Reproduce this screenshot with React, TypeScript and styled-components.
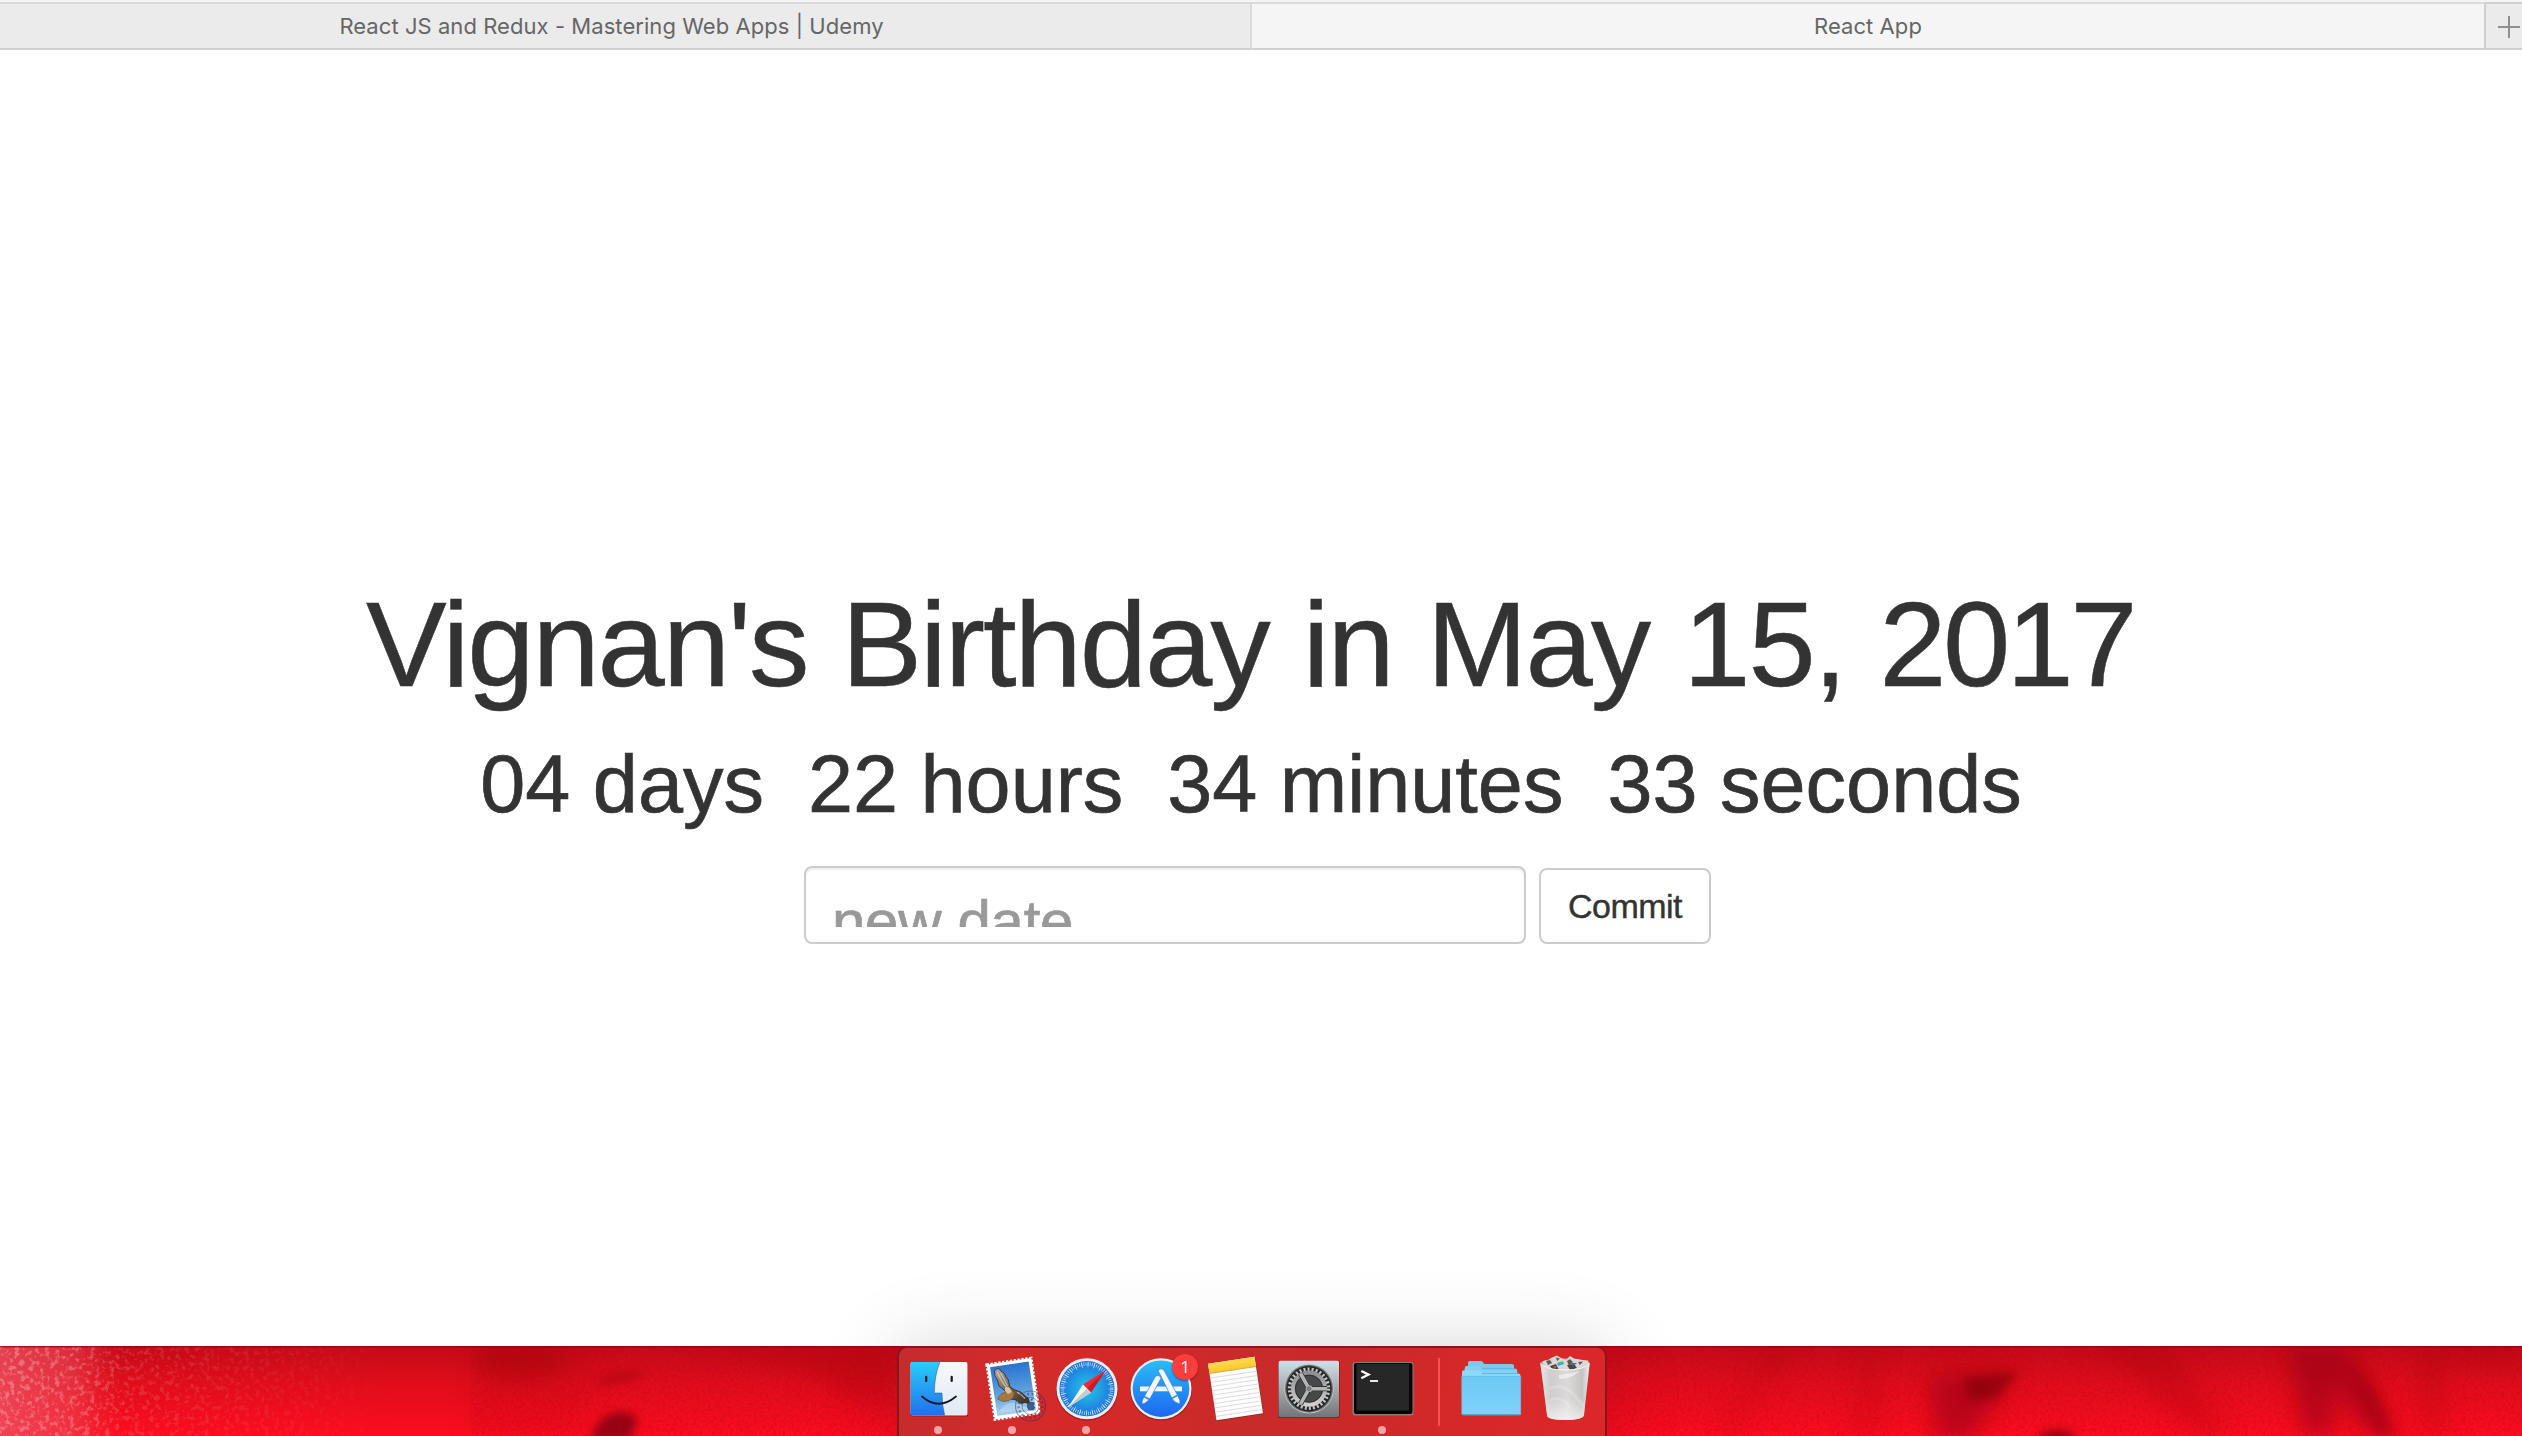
import React from "react";
import styled, { createGlobalStyle } from "styled-components";

const GlobalStyle = createGlobalStyle`
  * { box-sizing: border-box; }
  html, body { margin: 0; padding: 0; background: #fff; }
  body { overflow: hidden; font-family: "Liberation Sans", Arial, sans-serif; color: #333; }
`;

const Screen = styled.div`
  display: flex;
  flex-direction: column;
  width: 2522px;
  height: 1436px;
  overflow: hidden;
`;

const TabBar = styled.div`
  display: flex;
  height: 50px;
  padding-top: 2px;
  background: #f5f5f5;
`;

const Tab = styled.div<{ $width: number; $active?: boolean; $inset?: number }>`
  display: flex;
  align-items: center;
  justify-content: center;
  width: ${(p) => p.$width}px;
  height: 48px;
  padding: 0 ${(p) => p.$inset ?? 0}px 1px 0;
  border-top: 2px solid #dadada;
  border-bottom: 2px solid #d0d0d0;
  border-right: 2px solid ${(p) => (p.$active ? "#d0d0d0" : "#dadada")};
  background: ${(p) => (p.$active ? "#f5f5f5" : "#ebebeb")};
  font: 400 22px Inter, Roboto, sans-serif;
  letter-spacing: 0.06px;
  color: #666;
  white-space: pre;
`;

const NewTab = styled.div`
  flex: 1;
  display: flex;
  align-items: center;
  padding-left: 12px;
  border-top: 2px solid #d0d0d0;
  border-bottom: 2px solid #d0d0d0;
  background: #ebebeb;
  svg { display: block; margin-bottom: -2px; }
`;

const Page = styled.main`
  display: flex;
  flex-direction: column;
  align-items: center;
  height: 1296px;
  padding: 528px 22px 0 0;
  background: #fff;
`;

const Title = styled.h1`
  margin: 0;
  height: 132px;
  line-height: 132px;
  font-size: 121px;
  font-weight: 400;
  letter-spacing: -2.1px;
  word-spacing: 2.6px;
  white-space: nowrap;
  -webkit-text-stroke: 0.5px #333;
`;

const Year = styled.span`
  letter-spacing: -3.6px;
`;

const Countdown = styled.div`
  display: flex;
  gap: 44px;
  margin-top: 29px;
  padding-left: 2px;
  height: 90px;
  line-height: 90px;
  font-size: 81px;
  white-space: nowrap;
  -webkit-text-stroke: 0.7px #333;
`;

const Form = styled.div`
  display: flex;
  align-items: flex-end;
  gap: 13px;
  margin-top: 37px;
  margin-left: 15px;
`;

const Field = styled.div`
  width: 722px;
  height: 78px;
  padding: 0 26px;
  border: 2px solid #ccc;
  border-radius: 8px;
  box-shadow: inset 0 2px 2px rgba(0, 0, 0, 0.075);
`;

const Placeholder = styled.div`
  height: 59px;
  overflow: hidden;
  line-height: 108px;
  font-size: 60px;
  letter-spacing: -0.3px;
  color: #999;
  white-space: nowrap;
  -webkit-text-stroke: 0.7px #999;
`;

const Commit = styled.button`
  width: 172px;
  height: 76px;
  padding: 0;
  border: 2px solid #ccc;
  border-radius: 8px;
  background: #fff;
  font: 400 34px "Liberation Sans", Arial, sans-serif;
  letter-spacing: -0.5px;
  color: #333;
  -webkit-text-stroke: 0.4px #333;
`;

const Desktop = styled.div`
  position: relative;
  display: flex;
  justify-content: center;
  height: 90px;
  padding-right: 18px;
  background: #e80d1c;
`;

const Wallpaper = styled.svg`
  position: absolute;
  inset: 0;
  display: block;
`;

const Dock = styled.div`
  position: relative;
  display: flex;
  width: 710px;
  height: 100px;
  padding: 0 3px;
  border: 2px solid #85161a;
  border-radius: 10px 10px 0 0;
  background: linear-gradient(100deg, #c42c2d 0%, #d32a2a 17%, #d52929 30%, #c92a2a 48%, #c92929 62%, #d62829 80%, #dc2729 100%);
  box-shadow: 0 0 80px rgba(0, 0, 0, 0.16);
`;

const Slot = styled.div`
  position: relative;
  display: flex;
  flex-direction: column;
  flex-shrink: 0;
  align-items: center;
  width: 74px;
  svg { display: block; overflow: visible; }
`;

const Running = styled.span`
  width: 8px;
  height: 8px;
  margin-right: 2px;
  border-radius: 50%;
  background: #fda3a7;
`;

const Badge = styled.span`
  position: absolute;
  left: 48px;
  top: 6px;
  width: 26px;
  height: 26px;
  border-radius: 50%;
  background: #fb3d3d;
  box-shadow: 0 1px 2px rgba(0, 0, 0, 0.4);
  font: 400 17px/26px "Open Sans", sans-serif;
  color: #fff;
  text-align: center;
`;

const Divider = styled.span`
  flex: 0 0 2px;
  height: 68px;
  margin: 10px 14px 0 18px;
  background: #fb5153;
`;

/* Every icon is drawn in the dock's own coordinates; x is the left edge of its slot. */
const Icon = ({ x, children }: { x: number; children: React.ReactNode }) => (
  <svg width="74" height="78" viewBox={`${x} 1348 74 78`}>{children}</svg>
);

const Finder = () => (
  <Icon x={902}>
    <defs>
      <linearGradient id="fb" x1="0" y1="0" x2="0" y2="1"><stop offset="0" stopColor="#29cdf8" /><stop offset="1" stopColor="#2170ee" /></linearGradient>
      <linearGradient id="fw" x1="0" y1="0" x2="0" y2="1"><stop offset="0" stopColor="#f7f8fa" /><stop offset="1" stopColor="#e0e9f4" /></linearGradient>
    </defs>
    <rect x="910" y="1362.500" width="58" height="54" rx="2" fill="#7f1719" opacity=".6" />
    <rect x="910.5" y="1362" width="57" height="53.500" rx="2" fill="url(#fw)" />
    <path d="M912.5 1362H940Q934.5 1375 934.3 1393H942Q942 1405 944.7 1415.500H912.5Q910.5 1415.500 910.5 1413.500V1364Q910.5 1362 912.5 1362Z" fill="url(#fb)" />
    <path d="M940 1362Q934.5 1375 934.3 1393H942Q942 1405 944.7 1415.500" fill="none" stroke="#1a4d7a" strokeWidth=".7" opacity=".65" />
    <path d="M926.200 1376.800V1381M951.700 1376.800V1381" stroke="#101820" strokeWidth="2.200" strokeLinecap="round" />
    <path d="M922 1396.500Q938.500 1411 956 1396.500" fill="none" stroke="#101820" strokeWidth="1.700" strokeLinecap="round" />
  </Icon>
);

const Mail = () => (
  <Icon x={976}>
    <defs>
      <linearGradient id="sky" x1="0" y1="0" x2="0" y2="1"><stop offset="0" stopColor="#2a72ce" /><stop offset=".55" stopColor="#5b9ee0" /><stop offset="1" stopColor="#a9d0ee" /></linearGradient>
      <linearGradient id="wing" x1="0" y1="0" x2="1" y2="1"><stop offset="0" stopColor="#b3aca3" /><stop offset=".45" stopColor="#7d6a55" /><stop offset="1" stopColor="#3b2a1c" /></linearGradient>
    </defs>
    <g transform="rotate(-8.500 1013 1388.500)">
      <rect x="990.500" y="1361" width="45" height="55.500" fill="#fff" stroke="#fff" strokeWidth="2.600" strokeDasharray="2.300 1.600" />
      <rect x="993.500" y="1364" width="39" height="49.500" fill="url(#sky)" />
    </g>
    <path d="M999 1411Q1010 1398 1020 1405T1034 1398L1036 1408L997 1413Z" fill="#d6e9f7" opacity=".4" />
    <path d="M994.500 1371Q998 1366 1001 1371L1004 1373L1006 1377L1008 1379L1010 1387L1015 1390Q1021 1391 1024 1395L1028 1398L1030 1404L1025 1402.500L1021 1403.500L1016 1400L1011 1399Q1008 1393 1003 1389L999 1386L997.500 1380Q994 1376 994.500 1371Z" fill="url(#wing)" stroke="#33261a" strokeWidth=".8" />
    <path d="M997.500 1372Q1001 1381 1006 1387M1000.500 1373Q1004 1379 1007.500 1386M1017 1392Q1022 1395 1025 1398.500" stroke="#ddd7cb" strokeWidth="1.200" fill="none" opacity=".75" />
    <path d="M997.500 1399Q1000 1393.500 1005 1392.500L1010 1389L1014.500 1393L1013 1398Q1008 1402 1003 1401.500Z" fill="#a87843" stroke="#6e4a24" strokeWidth=".6" />
    <path d="M1005 1387.500Q1008 1385.500 1010 1388.500L1012 1392L1008 1394L1005 1391Z" fill="#d9c49c" />
    <g fill="none" stroke="#243452" opacity=".45">
      <circle cx="1030.500" cy="1406" r="15" strokeWidth="1.200" />
      <circle cx="1030.500" cy="1406" r="12" strokeWidth="2.500" strokeDasharray="2 2.400" />
      <circle cx="1030.500" cy="1406" r="8.500" strokeWidth="1" />
    </g>
    <path d="M1031 1402Q1034 1401.500 1035 1403Q1033 1406 1035.500 1407.500Q1034 1411 1031 1410Q1028 1411 1027 1407.500Q1026 1402 1031 1402ZM1030.500 1401Q1030.500 1398.500 1033 1398Q1033 1400.500 1030.500 1401Z" fill="#2d5385" opacity=".9" />
  </Icon>
);

const Safari = () => (
  <Icon x={1050}>
    <defs>
      <radialGradient id="saf"><stop offset="0" stopColor="#25c5e8" /><stop offset=".5" stopColor="#209fe3" /><stop offset="1" stopColor="#1e6fe0" /></radialGradient>
    </defs>
    <circle cx="1087" cy="1389.500" r="31" fill="#7f1719" opacity=".6" />
    <circle cx="1087" cy="1388.700" r="30.500" fill="#eceef0" />
    <circle cx="1087" cy="1388.700" r="27.600" fill="url(#saf)" />
    <circle cx="1087" cy="1388.700" r="24.700" fill="none" stroke="#dff1fb" strokeWidth="3.600" strokeDasharray=".75 1.405" opacity=".85" />
    <circle cx="1087" cy="1388.700" r="24" fill="none" stroke="#dff1fb" strokeWidth="5.400" strokeDasharray=".8 5.483" opacity=".8" />
    <path d="M1106 1370L1091 1392.500L1083 1384.500Z" fill="#ee2934" />
    <path d="M1106 1370L1091 1392.500L1087 1388.500Z" fill="#c61d27" />
    <path d="M1068 1407.500L1083 1384.500L1091 1392.500Z" fill="#f5f5f5" />
    <path d="M1068 1407.500L1087 1388.500L1091 1392.500Z" fill="#c6cbd0" />
  </Icon>
);

const AppStore = () => (
  <Icon x={1124}>
    <defs>
      <linearGradient id="as" x1="0" y1="0" x2="0" y2="1"><stop offset="0" stopColor="#28bdf9" /><stop offset="1" stopColor="#1f66ef" /></linearGradient>
    </defs>
    <circle cx="1161" cy="1389.500" r="31" fill="#7f1719" opacity=".6" />
    <circle cx="1161" cy="1388.700" r="30.500" fill="#eceef0" />
    <circle cx="1161" cy="1388.700" r="28.300" fill="url(#as)" />
    <rect x="1140" y="1386.500" width="42" height="4.800" fill="#f1f5fa" />
    <g stroke="#2a83e8" strokeWidth=".7" fill="#f5f7fa">
      <path d="M1154.800 1377.500Q1157 1374 1160.200 1376.600L1161 1378.200L1149.800 1399L1144.500 1396.200Z" />
      <path d="M1144 1397L1149 1399.800L1145 1403.200L1142 1404L1142.200 1401Z" />
      <path d="M1158.200 1370.800Q1160.800 1367 1164 1370.300L1177.300 1394.800L1171.800 1398Z" />
      <path d="M1172.200 1398.700L1177.800 1395.600Q1180.500 1400 1180 1403.800Q1175 1403 1172.200 1398.700Z" />
    </g>
  </Icon>
);

const Notes = () => (
  <Icon x={1198}>
    <defs>
      <linearGradient id="ny" x1="0" y1="0" x2="0" y2="1"><stop offset="0" stopColor="#fddb50" /><stop offset="1" stopColor="#fbc72a" /></linearGradient>
    </defs>
    <g transform="rotate(-8.500 1235.500 1388.500)">
      <rect x="1212" y="1360.800" width="47.500" height="57" fill="#5f3a14" opacity=".8" />
      <rect x="1212" y="1360" width="47" height="57" fill="#fdfdfd" />
      <rect x="1212" y="1360" width="47" height="9.500" fill="url(#ny)" />
      <path d="M1212 1369.800H1259" stroke="#c59c25" strokeWidth=".8" />
      <path d="M1212 1374.500h47m-47 4.300h47m-47 4.300h47m-47 4.300h47m-47 4.300h47m-47 4.300h47m-47 4.300h47m-47 4.300h47m-47 4.300h47m-47 4.300h47" stroke="#d6d6d6" strokeWidth=".8" />
    </g>
  </Icon>
);

const Settings = () => (
  <Icon x={1272}>
    <defs>
      <linearGradient id="sp" x1="0" y1="0" x2="0" y2="1"><stop offset="0" stopColor="#d0e0e7" /><stop offset=".55" stopColor="#a0a6aa" /><stop offset="1" stopColor="#737475" /></linearGradient>
      <linearGradient id="gr" x1="0" y1="0" x2="0" y2="1"><stop offset="0" stopColor="#8e8f90" /><stop offset="1" stopColor="#d0cfce" /></linearGradient>
    </defs>
    <rect x="1278" y="1361.500" width="61.500" height="56.500" rx="2" fill="#6a1a1c" />
    <rect x="1278.500" y="1360.800" width="60.500" height="56.400" rx="2" fill="url(#sp)" />
    <circle cx="1309" cy="1388.700" r="24.700" fill="#c7ccd0" />
    <circle cx="1309" cy="1388.700" r="24" fill="#6b6f72" />
    <circle cx="1309" cy="1388.700" r="22.700" fill="#252627" />
    <circle cx="1309" cy="1388.700" r="19.500" fill="none" stroke="#c4c4c3" strokeWidth="3.500" strokeDasharray="2 2.084" />
    <circle cx="1309" cy="1388.700" r="16" fill="#47484a" stroke="url(#gr)" strokeWidth="4.200" />
    <circle cx="1309" cy="1388.700" r="13.700" fill="none" stroke="#252627" strokeWidth=".8" />
    <path d="M1309 1388.700H1327M1309 1388.700L1300.500 1373.500M1309 1388.700L1300.500 1404" stroke="#303132" strokeWidth="5.200" />
    <path d="M1309 1388.700H1327M1309 1388.700L1300.500 1373.500M1309 1388.700L1300.500 1404" stroke="#b3b4b4" strokeWidth="3.600" />
    <circle cx="1309" cy="1388.700" r="3.400" fill="#aaabab" />
    <circle cx="1309" cy="1388.700" r="1.800" fill="#8b8c8c" stroke="#4b4b4b" strokeWidth=".6" />
  </Icon>
);

const Terminal = () => (
  <Icon x={1346}>
    <rect x="1352.500" y="1362" width="61" height="53.500" rx="2.500" fill="#827e7e" />
    <rect x="1354" y="1363" width="58.500" height="51" rx="2" fill="#060606" />
    <rect x="1356.500" y="1363.800" width="52.500" height="46.700" fill="#272727" />
    <path d="M1361.300 1371L1368.500 1374.500L1361.300 1378.200" fill="none" stroke="#fff" strokeWidth="2.300" />
    <path d="M1370 1381H1378" stroke="#fff" strokeWidth="1.800" />
  </Icon>
);

const Folder = () => (
  <Icon x={1454}>
    <defs>
      <linearGradient id="fo" x1="0" y1="0" x2="0" y2="1"><stop offset="0" stopColor="#6ecaf5" /><stop offset="1" stopColor="#7dd2fa" /></linearGradient>
    </defs>
    <path d="M1468 1363Q1468 1361 1470 1361H1481Q1483 1361 1484 1364H1512Q1514 1364 1514 1366V1380H1468Z" fill="#7dc8ef" />
    <path d="M1464.700 1368Q1464.700 1366 1466.700 1366H1479Q1481 1366 1482 1368.800H1515.500Q1517.300 1368.800 1517.300 1371V1382H1464.700Z" fill="#84cff3" />
    <path d="M1482 1368.800H1516" stroke="#4aa7d5" strokeWidth=".7" />
    <path d="M1462 1372.500Q1462 1370.300 1464 1370.300H1479Q1481 1370.300 1482.300 1373.600H1518.500Q1520.500 1373.600 1520.500 1376V1415H1462Z" fill="#91d9fa" />
    <path d="M1482 1373.600H1519" stroke="#4aa7d5" strokeWidth=".7" />
    <path d="M1461.700 1376.300H1520.700V1413.500Q1520.700 1415 1519 1415H1463.500Q1461.700 1415 1461.700 1413.500Z" fill="url(#fo)" stroke="#57b5df" strokeWidth=".6" />
    <path d="M1462 1414.700H1520" stroke="#4798bd" strokeWidth=".9" />
  </Icon>
);

const Trash = () => (
  <Icon x={1528}>
    <defs>
      <linearGradient id="tr" x1="0" y1="0" x2="1" y2="0"><stop offset="0" stopColor="#e8e8e8" /><stop offset=".2" stopColor="#cecccc" /><stop offset=".55" stopColor="#dcdad9" /><stop offset=".85" stopColor="#c6c4c3" /><stop offset="1" stopColor="#efefef" /></linearGradient>
      <linearGradient id="tb" x1="0" y1="0" x2="0" y2="1"><stop offset=".6" stopColor="#fff" stopOpacity="0" /><stop offset="1" stopColor="#fff" stopOpacity=".6" /></linearGradient>
    </defs>
    <ellipse cx="1565" cy="1363.500" rx="24.700" ry="5" fill="#b3a9a8" />
    <path d="M1543 1361L1548 1360L1552 1357.500L1557 1355.500L1561 1358L1566 1360L1570 1356L1574 1358.500L1582 1360L1588 1360.500L1589 1364L1580 1371H1551L1543 1365Z" fill="#d9d8d7" />
    <path d="M1546 1361L1550 1360L1552 1363L1548 1365ZM1556 1357.500L1560 1358.500L1557 1361ZM1567 1361L1570 1359L1573 1362L1569 1366ZM1578 1362L1583 1361.500L1580 1365Z" fill="#5e5957" />
    <path d="M1550 1366L1556 1364L1559 1370L1552 1369ZM1567 1365L1574 1364L1577 1368L1570 1370Z" fill="#4a4443" />
    <path d="M1557 1363L1563 1361.500L1564 1364L1558 1366Z" fill="#27b7c8" />
    <path d="M1553 1366L1557 1366L1555 1369Z" fill="#b9584f" />
    <path d="M1571 1363L1577 1363L1573 1366Z" fill="#4663a8" />
    <path d="M1558 1362L1563 1361.500L1560 1364Z" fill="#5cbd55" />
    <path d="M1540.300 1363.500Q1546 1370 1565 1370T1589.700 1363.500L1584 1415Q1583 1420 1565 1420T1547 1415Z" fill="url(#tr)" />
    <path d="M1540.300 1363.500Q1546 1370 1565 1370T1589.700 1363.500L1584 1415Q1583 1420 1565 1420T1547 1415Z" fill="url(#tb)" />
    <path d="M1559 1379Q1571 1379 1580 1371Q1573 1373 1559 1375Z" fill="#fff" opacity=".5" />
    <path d="M1549 1389Q1562 1382 1573 1394T1582 1404M1550 1400Q1562 1395 1570 1407" fill="none" stroke="#fff" strokeWidth="3" opacity=".2" />
    <path d="M1540.300 1363.500Q1546 1370 1565 1370T1589.700 1363.500" fill="none" stroke="#f7f7f7" strokeWidth="1" />
  </Icon>
);

const DesktopPicture = () => (
  <Wallpaper width="2522" height="90" viewBox="0 0 2522 90">
    <defs>
      <linearGradient id="base" x1="0" y1="0" x2="0" y2="1">
        <stop offset="0" stopColor="#c40b17" /><stop offset=".4" stopColor="#df0d1b" /><stop offset="1" stopColor="#fc0d1e" />
      </linearGradient>
      <linearGradient id="fadeA" x1="0" y1="0" x2="1" y2="0">
        <stop offset="0" stopColor="#fff" stopOpacity=".5" /><stop offset=".2" stopColor="#fff" stopOpacity=".4" /><stop offset=".32" stopColor="#fff" stopOpacity=".2" /><stop offset="1" stopColor="#fff" stopOpacity="0" />
      </linearGradient>
      <linearGradient id="pale" x1="0" y1="0" x2="1" y2="0">
        <stop offset="0" stopColor="#ee5465" stopOpacity=".75" /><stop offset=".6" stopColor="#ee5060" stopOpacity=".5" /><stop offset="1" stopColor="#ee4050" stopOpacity="0" />
      </linearGradient>
      <mask id="left"><rect width="400" height="90" fill="url(#fadeA)" /></mask>
      <filter id="speck" x="0" y="0" width="100%" height="100%">
        <feTurbulence type="fractalNoise" baseFrequency=".2" numOctaves="3" seed="4" />
        <feColorMatrix values="0 0 0 0 .93  0 0 0 0 .4  0 0 0 0 .42  5 0 0 0 -2.5" />
      </filter>
      <filter id="grain" x="0" y="0" width="100%" height="100%">
        <feTurbulence type="fractalNoise" baseFrequency=".35" numOctaves="2" seed="9" />
        <feColorMatrix values="0 0 0 0 .45  0 0 0 0 0  0 0 0 0 .02  1.500 0 0 0 -.62" />
      </filter>
      <filter id="b8" x="-60%" y="-60%" width="220%" height="220%"><feGaussianBlur stdDeviation="11" /></filter>
      <filter id="b4" x="-60%" y="-60%" width="220%" height="220%"><feGaussianBlur stdDeviation="4" /></filter>
    </defs>
    <rect width="2522" height="90" fill="url(#base)" />
    <rect width="120" height="90" fill="url(#pale)" />
    <g mask="url(#left)"><rect width="400" height="90" filter="url(#speck)" /></g>
    <g fill="#900510" filter="url(#b8)">
      <ellipse cx="520" cy="14" rx="45" ry="20" opacity=".32" />
      <path d="M470 0H600L580 90H470Z" opacity=".1" />
      <path d="M690 0H890V60L840 50L790 20Z" opacity=".22" />
      <path d="M1770 0H1800L1750 60L1740 90H1720Z" opacity=".16" />
      <path d="M1860 0H1880V90H1850Z" opacity=".14" />
      <path d="M1930 30L2015 24L1990 65L1970 95H1935Z" opacity=".55" />
      <path d="M2080 0H2170L2230 90H2200L2120 20Z" opacity=".22" />
      <path d="M2286 0H2345L2365 30L2400 90H2370L2330 40L2335 90H2305Z" opacity=".58" />
      <path d="M2415 0H2522V20L2440 15L2445 90H2425Z" opacity=".22" />
    </g>
    <g fill="#760009" filter="url(#b4)">
      <ellipse cx="620" cy="32" rx="24" ry="5" opacity=".3" transform="rotate(-12 620 32)" />
      <path d="M590 94Q600 66 622 66Q640 70 637 76L630 94Z" opacity=".75" />
      <path d="M1962 32L2018 26L1996 52L1970 55Z" opacity=".55" />
      <ellipse cx="2057" cy="92" rx="18" ry="8" opacity=".75" />
      <path d="M2350 15L2376 45L2395 90H2376L2362 55Z" opacity=".25" />
    </g>
    <rect x="470" width="2052" height="90" filter="url(#grain)" opacity=".5" />
    <rect width="2522" height="1.500" fill="#8b0710" opacity=".7" />
  </Wallpaper>
);

const apps = [
  { icon: Finder, running: true },
  { icon: Mail, running: true },
  { icon: Safari, running: true },
  { icon: AppStore, badge: "1" },
  { icon: Notes },
  { icon: Settings },
  { icon: Terminal, running: true },
];

const time = ["04 days", "22 hours", "34 minutes", "33 seconds"];

export default function App() {
  return (
    <Screen>
      <GlobalStyle />
      <TabBar>
        <Tab $width={1252} $inset={27}>React JS and Redux - Mastering Web Apps | Udemy</Tab>
        <Tab $width={1234} $active>React App</Tab>
        <NewTab>
          <svg width="22" height="22" viewBox="0 0 22 22"><path d="M11 0V22M0 11H22" stroke="#8f8f8f" strokeWidth="2" /></svg>
        </NewTab>
      </TabBar>
      <Page>
        <Title>Vignan's Birthday in May 15, <Year>2017</Year></Title>
        <Countdown>{time.map((t) => <span key={t}>{t}</span>)}</Countdown>
        <Form>
          <Field><Placeholder>new date</Placeholder></Field>
          <Commit>Commit</Commit>
        </Form>
      </Page>
      <Desktop>
        <DesktopPicture />
        <Dock>
          {apps.map(({ icon: Glyph, running, badge }, i) => (
            <Slot key={i}>
              <Glyph />
              {running && <Running />}
              {badge && <Badge>{badge}</Badge>}
            </Slot>
          ))}
          <Divider />
          <Slot><Folder /></Slot>
          <Slot><Trash /></Slot>
        </Dock>
      </Desktop>
    </Screen>
  );
}
